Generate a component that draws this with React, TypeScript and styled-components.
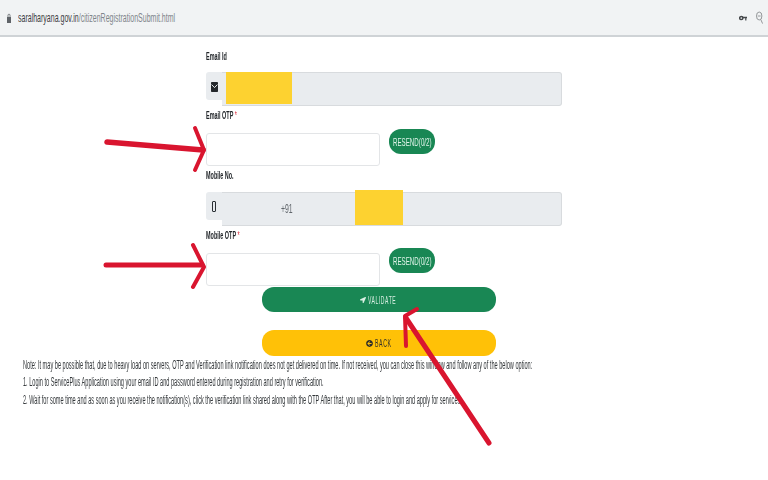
import React from "react";
import styled, { createGlobalStyle } from "styled-components";
import { FaArrowCircleLeft, FaLocationArrow } from "react-icons/fa";

const Global = createGlobalStyle`
  html, body { margin: 0; padding: 0; background: #fff; }
  body { font-family: "Liberation Sans", Arial, sans-serif; width: 768px; height: 480px; overflow: hidden; }
`;

const Page = styled.div`
  position: relative;
  width: 768px;
  height: 480px;
  overflow: hidden;
  filter: blur(0.4px);
`;

const AddressBar = styled.header`
  height: 35px;
  background: #f1f3f4;
  border-bottom: 2px solid #cfd3d6;
  display: flex;
  align-items: center;
  padding: 0 5px 0 7px;
`;

const Squeezed = styled.span<{ $sx: number; $w?: number }>`
  display: inline-block;
  white-space: nowrap;
  width: ${(p) => (p.$w ? `${p.$w}px` : "auto")};
  transform: scaleX(${(p) => p.$sx});
  transform-origin: left center;
`;

const Url = styled.div`
  display: flex;
  align-items: center;
  gap: 7px;
  font-size: 13px;
  color: #3c4043;
`;

const UrlPath = styled.span`
  color: #80868b;
`;

const BarIcons = styled.div`
  margin-left: auto;
  display: flex;
  align-items: center;
  gap: 9px;
`;

const FormColumn = styled.main`
  width: 356px;
  margin-left: 206px;
  display: flex;
  flex-direction: column;
`;

const Label = styled.label<{ $h: number; $pt: number }>`
  display: block;
  box-sizing: border-box;
  height: ${(p) => p.$h}px;
  padding-top: ${(p) => p.$pt}px;
  font-size: 10.5px;
  line-height: 12px;
  font-weight: 700;
  color: #212529;
`;

const Star = styled.span`
  color: #dc3545;
  font-weight: 400;
`;

const Group = styled.div`
  display: flex;
  height: 34px;
  position: relative;
`;

const Addon = styled.div`
  width: 16px;
  height: 27px;
  padding-top: 1px;
  background: #e9ecef;
  border-radius: 3px 0 0 3px;
  display: flex;
  align-items: center;
  justify-content: center;
  flex: none;
`;

const ReadOnly = styled.div`
  flex: 1;
  background: #e9ecef;
  border: 1px solid #d8dbde;
  border-left: none;
  border-radius: 0 3px 3px 0;
  position: relative;
  display: flex;
  align-items: center;
  font-size: 12.5px;
  color: #60666b;
`;

const Prefix = styled.span`
  margin-left: 59px;
`;

const Redaction = styled.div<{ $left: number; $w: number; $top: number; $h: number }>`
  position: absolute;
  left: ${(p) => p.$left}px;
  width: ${(p) => p.$w}px;
  top: ${(p) => p.$top}px;
  height: ${(p) => p.$h}px;
  background: #fdd230;
`;

const OtpRow = styled.div`
  display: flex;
  height: 33px;
  align-items: flex-start;
`;

const OtpInput = styled.div`
  width: 174px;
  height: 33px;
  box-sizing: border-box;
  background: #fff;
  border: 1px solid #e3e5e7;
  border-radius: 3px;
  flex: none;
`;

const Resend = styled.button<{ $lift: number }>`
  margin: -${(p) => p.$lift}px 0 0 9px;
  width: 46px;
  height: 25px;
  padding: 0 0 0 4px;
  border: none;
  border-radius: 12px;
  background: #198754;
  color: #dff3e8;
  font-family: inherit;
  font-size: 10.5px;
  text-align: left;
  overflow: visible;
`;

const Wide = styled.button<{ $bg: string; $fg: string; $mt: number; $h: number }>`
  width: 234px;
  height: ${(p) => p.$h}px;
  margin: ${(p) => p.$mt}px 0 0 56px;
  border: none;
  border-radius: 12px;
  background: ${(p) => p.$bg};
  color: ${(p) => p.$fg};
  font-family: inherit;
  font-size: 10.5px;
  letter-spacing: 1.2px;
  display: flex;
  align-items: center;
  justify-content: center;
  gap: 2px;
  padding: 0;
`;

const Notes = styled.section`
  display: flex;
  flex-direction: column;
  margin-left: 23px;
  font-size: 12px;
  color: #33373a;
`;

const NoteLine = styled.div<{ $h: number }>`
  height: ${(p) => p.$h}px;
  line-height: ${(p) => p.$h}px;
  white-space: nowrap;
`;

const Overlay = styled.svg`
  position: absolute;
  inset: 0;
  pointer-events: none;
`;

const NOTE_SX = 0.467;

export default function App() {
  return (
    <Page>
      <Global />
      <AddressBar>
        <Url>
          <svg width="4" height="10" viewBox="0 0 4 10">
            <path d="M1 4V2.2a1 1 0 0 1 2 0V4" fill="none" stroke="#5f6368" strokeWidth="0.8" />
            <rect x="0" y="4" width="4" height="6" fill="#5f6368" />
          </svg>
          <Squeezed $sx={0.54}>
            saralharyana.gov.in<UrlPath>/citizenRegistrationSubmit.html</UrlPath>
          </Squeezed>
        </Url>
        <BarIcons>
          <svg width="8" height="8" viewBox="0 0 8 8">
            <circle cx="2.3" cy="4" r="1.6" fill="none" stroke="#45484b" strokeWidth="1.5" />
            <path d="M3.5 2.8H8v1.4H7.4V6.4H6.2V4.2H3.5z" fill="#45484b" />
          </svg>
          <svg width="7" height="13" viewBox="0 0 7 13">
            <ellipse cx="3.2" cy="5" rx="2.7" ry="4" fill="none" stroke="#8a8d90" strokeWidth="0.9" />
            <path d="M4.8 8.6L6.6 12.6M1.8 5h2.8" fill="none" stroke="#8a8d90" strokeWidth="0.9" />
          </svg>
        </BarIcons>
      </AddressBar>
      <FormColumn>
        <Label $h={35} $pt={13}><Squeezed $sx={0.52}>Email Id</Squeezed></Label>
        <Group>
          <Addon>
            <svg width="7" height="10" viewBox="0 0 7 10">
              <rect width="7" height="10" rx="0.8" fill="#23272b" />
              <path d="M0.6 2.6L3.5 5.6L6.4 2.6" fill="none" stroke="#e9ecef" strokeWidth="1" />
            </svg>
          </Addon>
          <ReadOnly />
          <Redaction $left={20} $w={66} $top={0} $h={32} />
        </Group>
        <Label $h={27} $pt={3}><Squeezed $sx={0.52}>Email OTP <Star>*</Star></Squeezed></Label>
        <OtpRow>
          <OtpInput />
          <Resend $lift={4}><Squeezed $sx={0.59}>RESEND(0/2)</Squeezed></Resend>
        </OtpRow>
        <Label $h={26} $pt={3}><Squeezed $sx={0.52}>Mobile No.</Squeezed></Label>
        <Group>
          <Addon>
            <svg width="4" height="11" viewBox="0 0 4 11">
              <rect x="0.5" y="0.5" width="3" height="10" rx="0.5" fill="none" stroke="#2b3035" strokeWidth="1" />
            </svg>
          </Addon>
          <ReadOnly><Prefix><Squeezed $sx={0.55}>+91</Squeezed></Prefix></ReadOnly>
          <Redaction $left={149} $w={48} $top={-2} $h={35} />
        </Group>
        <Label $h={27} $pt={3}><Squeezed $sx={0.52}>Mobile OTP <Star>*</Star></Squeezed></Label>
        <OtpRow>
          <OtpInput />
          <Resend $lift={5}><Squeezed $sx={0.59}>RESEND(0/2)</Squeezed></Resend>
        </OtpRow>
        <Wide $bg="#198754" $fg="#d9efe3" $mt={1} $h={25}>
          <FaLocationArrow size={6} />
          <Squeezed $sx={0.48} $w={30}>VALIDATE</Squeezed>
        </Wide>
        <Wide $bg="#ffc107" $fg="#33302a" $mt={18} $h={26}>
          <FaArrowCircleLeft size={7} />
          <Squeezed $sx={0.5} $w={17}>BACK</Squeezed>
        </Wide>
      </FormColumn>
      <Notes>
        <NoteLine $h={18}>
          <Squeezed $sx={NOTE_SX}>
            Note: It may be possible that, due to heavy load on servers, OTP and Verification link notification does not get delivered on time. If not received, you can close this window and follow any of the below option:
          </Squeezed>
        </NoteLine>
        <NoteLine $h={17}>
          <Squeezed $sx={NOTE_SX}>
            1. Login to ServicePlus Application using your email ID and password entered during registration and retry for verification.
          </Squeezed>
        </NoteLine>
        <NoteLine $h={19}>
          <Squeezed $sx={NOTE_SX}>
            2. Wait for some time and as soon as you receive the notification(s), click the verification link shared along with the OTP After that, you will be able to login and apply for services.
          </Squeezed>
        </NoteLine>
      </Notes>
      <Overlay width="768" height="480" viewBox="0 0 768 480">
        <g fill="none" stroke="#d9152f" strokeLinecap="round" strokeLinejoin="round">
          <path d="M107 142L203 150" strokeWidth="5.5" />
          <path d="M195 128L204 150L195 170" strokeWidth="4" />
          <path d="M106 265L202 265" strokeWidth="5" />
          <path d="M193 245L204 267L193 287" strokeWidth="4" />
          <path d="M489 443L406 318" strokeWidth="5" />
          <path d="M417 309L405 316L406 346" strokeWidth="4" />
        </g>
      </Overlay>
    </Page>
  );
}
